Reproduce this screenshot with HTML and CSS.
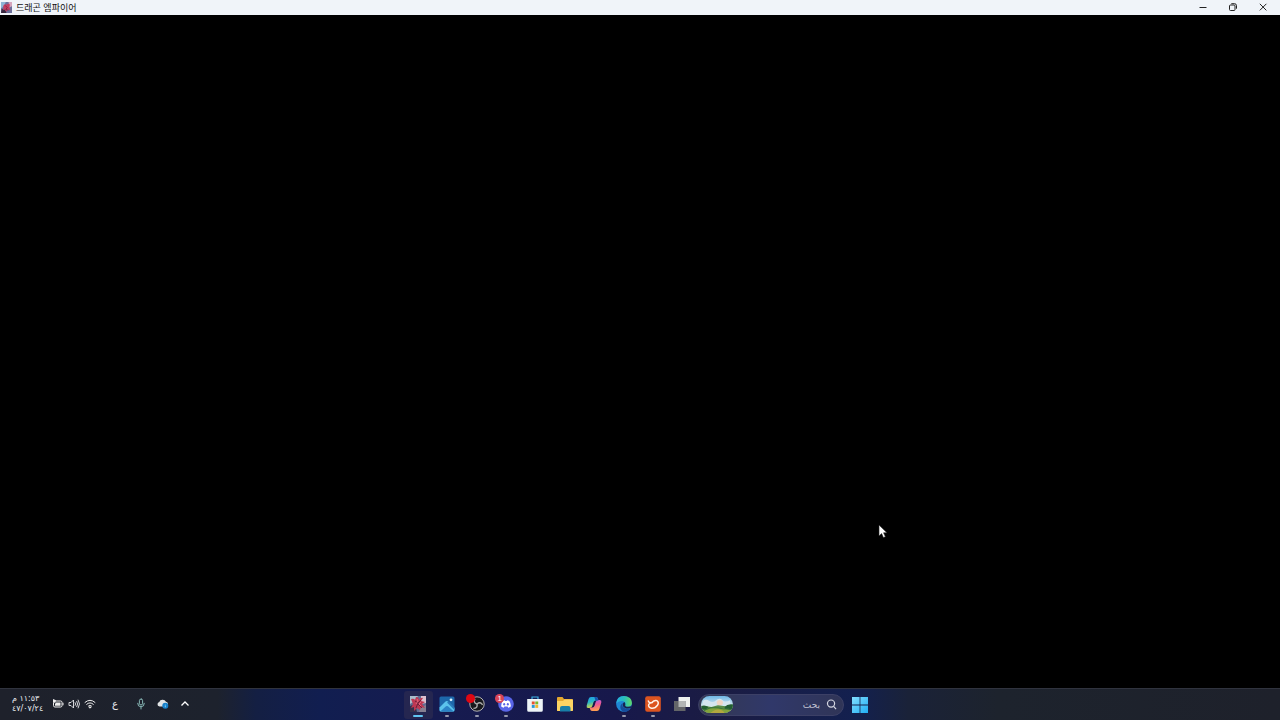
FILE: index.html
```html
<!DOCTYPE html>
<html lang="ar">
<head>
    <meta charset="UTF-8">
    <meta name="viewport" content="width=device-width, initial-scale=1.0">
    <title>드래곤 엠파이어</title>
    <link rel="stylesheet" href="styles.css">
</head>
<body>
    <header class="titlebar">
        <svg class="app-icon" viewBox="0 0 16 16">
            <rect width="16" height="16" fill="#6c709c"/>
            <path d="M0 0h7L4 7 0 9z" fill="#8eb4d5"/>
            <path d="M11 0h5v6l-4 2z" fill="#d5a5bd"/>
            <path d="M0 16l1-6 5 1 2 5z" fill="#38273f"/>
            <path d="M3 6q2-4 5-2 3-3 5 0l-1 4 2 4-4-1-2 3-3-3-3 1 2-3z" fill="#c53d60"/>
            <path d="M6 5l3 3-2 3 4 1" fill="none" stroke="#701c37"/>
        </svg>
        <h1 class="title" lang="ko">드래곤 엠파이어</h1>
        <div class="window-buttons">
            <button class="window-button" aria-label="Minimize"><svg viewBox="0 0 10 10"><path d="M1.5 5.5h7"/></svg></button>
            <button class="window-button" aria-label="Restore"><svg viewBox="0 0 10 10"><rect x="1.5" y="3" width="5.5" height="5.5" rx="1"/><path d="M3.3 1.7h3.2q2 0 2 2v3"/></svg></button>
            <button class="window-button" aria-label="Close"><svg viewBox="0 0 10 10"><path d="M1.8 1.8l6.6 6.6M8.4 1.8L1.8 8.4"/></svg></button>
        </div>
    </header>

    <main class="screen">
        <svg class="cursor" viewBox="0 0 10 15"><path d="M1 1v11l2.6-2.4 1.8 4 2-.9-1.8-3.9H9z" fill="#fff" stroke="#222" stroke-width=".6"/></svg>
    </main>

    <footer class="taskbar">
        <div class="tray">
            <button class="clock" dir="rtl"><span>١١:٥٣ م</span><span>٤٧/٠٧/٢٤</span></button>
            <button class="status" aria-label="Battery, volume, network">
                <svg viewBox="0 0 12 12"><rect x="1.5" y="3" width="8.5" height="6" rx="1.4" fill="none" stroke="#eee"/><path d="M4 4.5h4.5v3.3H3V6zM10.5 4.8h1v2.4h-1z" fill="#eee"/><path d="M1 1l3 1.3L3.2 5 1 4z" fill="#eee"/></svg>
                <svg viewBox="0 0 12 12" fill="none" stroke="#e4e5e9" stroke-width=".9" stroke-linejoin="round"><path d="M1 4.5h2L5.5 2v8L3 7.5H1zM7 4.3q1.2 1.7 0 3.4M8.6 3q2 3 0 6M10 1.7q3 4.3 0 8.6"/></svg>
                <svg viewBox="0 0 12 12" fill="none" stroke="#eee" stroke-width="1" stroke-linecap="round"><path d="M1 4.4q5-4.4 10 0M2.7 6.3q3.3-3 6.6 0M4.4 8q1.6-1.5 3.2 0"/><circle cx="6" cy="9.4" r=".7" fill="#eee"/></svg>
            </button>
            <button class="language" aria-label="Arabic keyboard">ع</button>
            <button class="tray-button" aria-label="Microphone"><svg viewBox="0 0 12 12" fill="none" stroke="#94c8c5" stroke-width=".9" stroke-linecap="round"><rect x="4.4" y="1" width="3.2" height="6" rx="1.6"/><path d="M2.7 5.3q0 3.5 3.3 3.5t3.3-3.5M6 9v2"/></svg></button>
            <button class="tray-button" aria-label="OneDrive"><svg viewBox="0 0 12 12"><path d="M2.600 8.500Q.3 8.200.5 6q.2-1.700 1.800-2Q3 1.500 5.800 1.700 8 1.900 9 3.800q2 .4 2 2.400L9 8.500z" fill="#e1e4e5"/><circle cx="8.300" cy="7.800" r="3" fill="#1680c9"/><path d="M8.300 7.300v2M8.300 6v.4" stroke="#9cdcff" stroke-width=".8"/></svg></button>
            <button class="tray-button" aria-label="Show hidden icons"><svg viewBox="0 0 12 12"><path d="M2.500 7.500L6 4l3.500 3.500" fill="none" stroke="#fff" stroke-width="1.300"/></svg></button>
        </div>

        <div class="pinned">
            <nav class="apps">
                <button class="app active" aria-label="드래곤 엠파이어">
                    <svg viewBox="0 0 16 16"><rect width="16" height="16" fill="#626b91"/><path d="M0 0h8L5 5 0 8z" fill="#a9bccb"/><path d="M11 0h5v7l-5 1z" fill="#dcc0cf"/><path d="M0 10l5-2 2 8H0z" fill="#35304b"/><path d="M10 12l6-3v7H9z" fill="#858092"/><path d="M1 3q3-1 4 1l1-3q3 0 3 3 2-3 4-2l-2 3 4 1-3 2 3 4-4-1-1 3-3-2-3 3v-4l-3 1 2-4z" fill="#be3853"/><path d="M5 5l3 2 3-3M8 7l-2 5M8 8l4 4" fill="none" stroke="#6d2039"/><path d="M7 3l1 2-2 3M11 6l-2 2 2 2" fill="none" stroke="#ef7186" stroke-width=".8"/></svg>
                </button>
                <button class="app running" aria-label="Photos">
                    <svg viewBox="0 0 16 16"><rect x=".5" y=".5" width="15" height="15" rx="1.500" fill="#1d67ab"/><path d="M.5 11.500l6-6q1.300-1 2.600 0l6.400 6.500v2q0 1.500-1.500 1.500H2Q.5 15.500.5 14z" fill="#5bc3ed"/><path d="M1.500 15.300l5.500-5q1-.8 2 0l5.500 5z" fill="#2b83c7"/><path d="M9.500 5.800l6 6v2.300l-7.500-7.500z" fill="#2a79bb"/><circle cx="12" cy="3.800" r="1.400" fill="#d9f4ff"/></svg>
                </button>
                <button class="app running" aria-label="OBS Studio">
                    <svg viewBox="0 0 16 16"><circle cx="8" cy="8" r="7.200" fill="#17191d" stroke="#c6c5c3" stroke-width=".9"/><g fill="none" stroke="#aaa" stroke-width="1.400"><path d="M8 8Q3.800 6.700 6 2.700"/><path d="M8 8Q3.800 6.700 6 2.700" transform="rotate(120 8 8)"/><path d="M8 8Q3.800 6.700 6 2.700" transform="rotate(240 8 8)"/></g></svg>
                    <span class="badge recording"></span>
                </button>
                <button class="app running" aria-label="Discord">
                    <svg viewBox="0 0 16 16"><circle cx="8" cy="8" r="7.800" fill="#5965e8"/><path d="M4.600 5q1.500-.8 2.200-.8l.4.700h1.600l.4-.700q.8 0 2.200.8Q13 7.600 12.800 10.500q-1.200 1-2.500 1.200l-.7-1.100H6.400l-.7 1.100q-1.300-.2-2.500-1.200Q3 7.600 4.600 5z" fill="#fff"/><ellipse cx="6.200" cy="8.300" rx="1" ry="1.200" fill="#5965e8"/><ellipse cx="9.800" cy="8.300" rx="1" ry="1.200" fill="#5965e8"/></svg>
                    <span class="badge">1</span>
                </button>
                <button class="app" aria-label="Microsoft Store">
                    <svg viewBox="0 0 16 16"><path d="M5 4V1h6v3" fill="none" stroke="#3dafe4" stroke-width="1.200"/><path d="M.2 3h15.600v11.300q0 1.500-1.500 1.500H1.700q-1.500 0-1.500-1.500z" fill="#edf4f7"/><path d="M4.800 5.500h2.900v2.900H4.800z" fill="#e6532f"/><path d="M8.300 5.500h2.900v2.900H8.300z" fill="#78b82a"/><path d="M4.800 9h2.900v2.900H4.800z" fill="#2798d5"/><path d="M8.300 9h2.900v2.900H8.300z" fill="#f3b52b"/></svg>
                </button>
                <button class="app" aria-label="File Explorer">
                    <svg viewBox="0 0 16 16"><path d="M0 2q0-1 1-1h4.500L7 3h8q1 0 1 1v10q0 1-1 1H0z" fill="#e3a72f"/><path d="M0 5h6l1.500-1.500H15q1 0 1 1V14q0 1-1 1H1q-1 0-1-1z" fill="#fbd363"/><path d="M3 15.500v-3.500q0-2 2-2h6.500q2 0 2 2v3.500z" fill="#187fa8"/></svg>
                </button>
                <button class="app" aria-label="Copilot">
                    <svg viewBox="0 0 16 16"><defs><linearGradient id="cool" x2=".3" y2="1"><stop stop-color="#219be5"/><stop offset=".5" stop-color="#28b7c8"/><stop offset="1" stop-color="#d8d943"/></linearGradient><linearGradient id="warm" x2=".2" y2="1"><stop stop-color="#a365ed"/><stop offset=".5" stop-color="#ed5795"/><stop offset="1" stop-color="#ff9d51"/></linearGradient></defs><path d="M5 1h5q1.500 0 2 2l.4 1.500H9.500Q8 4.500 7.500 6.300L6.300 10Q5.700 12 3.500 12H2Q.2 12 .7 9.500L2.600 3Q3.200 1 5 1z" fill="url(#cool)"/><path d="M11 15H6q-1.500 0-2-2l-.4-1.500h2.900Q8 11.500 8.500 9.700L9.700 6Q10.300 4 12.500 4H14q1.800 0 1.300 2.500L13.400 13Q12.800 15 11 15z" fill="url(#warm)"/><path d="M8.300 1H10q1.500 0 2 2l.4 1.500H9.500z" fill="#1750af"/></svg>
                </button>
                <button class="app running" aria-label="Microsoft Edge">
                    <svg viewBox="0 0 16 16"><defs><linearGradient id="edge"><stop stop-color="#27aee4"/><stop offset=".5" stop-color="#28bdbd"/><stop offset="1" stop-color="#62d968"/></linearGradient></defs><circle cx="8" cy="8" r="7.900" fill="#1e86d4"/><path d="M.2 7.500Q.8.100 8 .1q7.900.500 7.900 7Q15.700 10.700 12 10.700q-3.500 0-2.700-2 .8-3.200-2.800-3.700Q2.500 4.500.2 7.500z" fill="url(#edge)"/><path d="M7 7q-1.700 3 1 4.800 3 2 7 .2-2.700 4-7.500 3.900Q3.500 13.500 4.500 9.700 5.300 7.500 7 7z" fill="#174d9c"/><path d="M7.200 7q-1.500 3.500 2 5 3.200 1.200 6-.3l.8-2.200q-1.700 1.300-4 1.200-3.500 0-2.700-2Q9.400 7.300 8.500 6z" fill="#18224f"/></svg>
                </button>
                <button class="app running" aria-label="Game launcher">
                    <svg viewBox="0 0 16 16"><rect x=".2" y=".2" width="15.600" height="15.600" rx="2" fill="#dc5420"/><path d="M3.300 5Q4 7.200 6.800 6.500 9.500 3.700 12 4.700q2.200 1.600.7 4.300-2.500 3.600-6.200 3.200Q2.800 11.200 3.700 8.500 4.500 6.500 7.500 6.500" fill="none" stroke="#fff2e9" stroke-width="1.400" stroke-linecap="round"/></svg>
                </button>
                <button class="app" aria-label="Task view">
                    <svg viewBox="0 0 16 16"><path d="M4.500 1H16v10H4.500z" fill="#eef1ee"/><path d="M0 5h11.500v10H0z" fill="#636568"/><path d="M4.500 5h7v6h-7z" fill="#b2b5b4"/></svg>
                </button>
            </nav>
            <label class="search" dir="rtl">
                <svg class="search-icon" viewBox="0 0 12 12"><circle cx="5.500" cy="5" r="3.900"/><path d="M8.300 8L11 11"/></svg>
                <input type="text" placeholder="بحث" aria-label="بحث">
                <svg class="landscape" viewBox="0 0 34 20" preserveAspectRatio="none">
                    <defs><linearGradient id="sky" x2="0" y2="1"><stop stop-color="#70b8e6"/><stop offset=".6" stop-color="#d9e9ee"/></linearGradient></defs>
                    <rect width="34" height="20" fill="url(#sky)"/>
                    <path d="M2 6q3-3 7 0t8-2q4-2 6 1t8 0v6H2z" fill="#d4e5ef"/><circle cx="20" cy="8" r="3.300" fill="#f0d5c4"/>
                    <path d="M0 13l6-1 5 1 7-2 8 1 8-2v10H0z" fill="#568b46"/><path d="M0 12q4-2 8 1l-3 3H0zM25 13q3-4 9-3v6h-8z" fill="#235e32"/><path d="M3 18q11-8 29-1v3H2z" fill="#82a33c"/><path d="M10 20q5-5 9-4 5 1 6 4z" fill="#b2a83f"/><path d="M3 17q7-5 15-3 6 2 12 1" stroke="#367139" fill="none"/>
                </svg>
            </label>
            <button class="start" aria-label="Start"><svg viewBox="0 0 16 16"><defs><linearGradient id="win" x2="1" y2="1"><stop stop-color="#83deff"/><stop offset="1" stop-color="#20aef4"/></linearGradient></defs><path d="M0 0h7.600v7.600H0zM8.400 0H16v7.600H8.400zM0 8.400h7.600V16H0zM8.400 8.400H16V16H8.400z" fill="url(#win)"/></svg></button>
        </div>
    </footer>
</body>
</html>
```

FILE: styles.css
```css
* {
    box-sizing: border-box;
}
body {
    margin: 0;
    min-height: 100vh;
    display: flex;
    flex-direction: column;
    background: #000;
    font-family: "Noto Sans", "DejaVu Sans", "Noto Sans CJK KR", sans-serif;
}
button {
    display: flex;
    align-items: center;
    justify-content: center;
    padding: 0;
    border: 0;
    background: none;
    color: #eceef2;
    font: inherit;
}
svg {
    display: block;
    flex: none;
}
.titlebar {
    display: flex;
    align-items: center;
    height: 15px;
    padding-left: 1px;
    background: #f0f4f9;
}
.app-icon {
    width: 11px;
    height: 11px;
}
.title {
    margin: 0 0 0 4px;
    color: #111;
    font: 9px/14px "Noto Sans CJK KR", sans-serif;
}
.window-buttons {
    display: flex;
    align-self: flex-start;
    margin-left: auto;
    padding-right: 2px;
}
.window-button {
    width: 30px;
    height: 14px;
}
.window-button svg {
    width: 10px;
    height: 10px;
    fill: none;
    stroke: #222;
    stroke-width: 1;
}
.screen {
    position: relative;
    flex: 1;
}
.cursor {
    position: absolute;
    left: 878px;
    top: 509px;
    width: 10px;
    height: 15px;
}
.taskbar {
    display: grid;
    grid-template-columns: 1fr auto 1fr;
    height: 32px;
    border-top: 1px solid #30333e;
    background: linear-gradient(90deg, #1e212b 0%, #1d222d 17%, #141f43 20%, #111e50 25%, #161b50 34%, #17184b 48%, #1b1c43 56%, #13204f 67%, #1a2238 71%, #1d232d 78%, #1e212b 100%);
}
.tray {
    display: flex;
    align-items: center;
    padding: 0 0 2px 12px;
}
.clock {
    flex-direction: column;
    align-items: flex-end;
    width: 31px;
    font: 8px/10px "DejaVu Sans", sans-serif;
    white-space: nowrap;
}
.status {
    gap: 4px;
    margin-left: 9px;
}
.status svg,
.tray-button svg {
    width: 12px;
    height: 12px;
}
.language {
    width: 16px;
    margin-left: 11px;
    font: 10px/12px "DejaVu Sans", sans-serif;
}
.tray-button {
    width: 22px;
    height: 24px;
}
.language + .tray-button {
    margin-left: 7px;
}
.pinned {
    display: flex;
    align-items: center;
}
.apps {
    display: flex;
    width: 294px;
}
.app {
    position: relative;
    flex: 1;
    height: 28px;
    padding: 0 2px 1px 0;
    border-radius: 3px;
}
.app svg {
    width: 16px;
    height: 16px;
}
.app.active {
    background: #252650;
}
.app.running::after,
.app.active::after {
    content: "";
    position: absolute;
    bottom: 2px;
    left: 12px;
    width: 4px;
    height: 2px;
    border-radius: 1px;
    background: #9699ad;
}
.app.active::after {
    left: 9px;
    width: 10px;
    background: #60c6f3;
}
.badge {
    position: absolute;
    top: 3px;
    left: 3px;
    width: 9px;
    height: 9px;
    border-radius: 50%;
    background: #d94458;
    color: #fff;
    font: 8px/9px "Liberation Sans", sans-serif;
    text-align: center;
}
.badge.recording {
    background: #df0712;
}
.search {
    display: flex;
    align-items: center;
    width: 146px;
    height: 22px;
    padding: 0 6px 0 2px;
    border: 1px solid #3c4066;
    border-radius: 11px;
    background: linear-gradient(90deg, #343851, #30386a 50%, #303557);
}
.search-icon {
    width: 11px;
    height: 11px;
    fill: none;
    stroke: #d6d8e2;
    stroke-width: 1.3;
}
.search input {
    flex: 1;
    min-width: 0;
    height: 18px;
    padding: 0 6px 0 0;
    border: 0;
    outline: 0;
    background: none;
    color: #d0d2df;
    font: 9px/16px "DejaVu Sans", sans-serif;
}
.search input::placeholder {
    color: #c0c3d2;
    opacity: 1;
}
.landscape {
    width: 32px;
    height: 17px;
    border-radius: 9px;
}
.start {
    width: 32px;
    height: 28px;
}
.start svg {
    width: 16px;
    height: 16px;
}
```
